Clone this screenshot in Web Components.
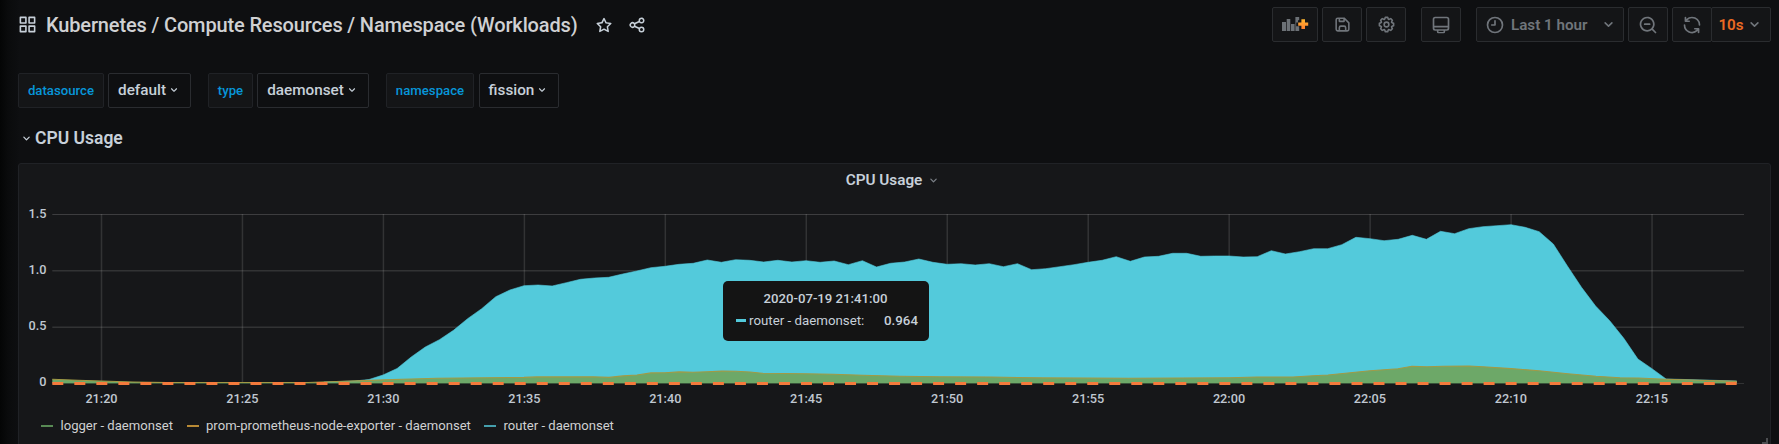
<!DOCTYPE html>
<html lang="en">
<head>
<meta charset="utf-8">
<title>Kubernetes / Compute Resources / Namespace (Workloads)</title>
<style>
html,body{margin:0;height:100%;background:#0e0f11;overflow:hidden}
body{font-family:Roboto,sans-serif;color:#c7d0d9}
</style>
</head>
<body>
<dash-page></dash-page>
<script>
const define = (name, html, setup) => customElements.define(name, class extends HTMLElement {
  connectedCallback() {
    if (this.shadowRoot) return;
    const t = document.createElement('template');
    t.innerHTML = typeof html === 'function' ? html(this) : html;
    this.attachShadow({mode: 'open'}).append(t.content.cloneNode(true));
    if (setup) setup(this);
  }
});

const ICONS = {
  apps: '<path d="M10 13H3a1 1 0 0 0-1 1v7a1 1 0 0 0 1 1h7a1 1 0 0 0 1-1v-7a1 1 0 0 0-1-1Zm-1 7H4v-5h5ZM21 2h-7a1 1 0 0 0-1 1v7a1 1 0 0 0 1 1h7a1 1 0 0 0 1-1V3a1 1 0 0 0-1-1Zm-1 7h-5V4h5Zm1 4h-7a1 1 0 0 0-1 1v7a1 1 0 0 0 1 1h7a1 1 0 0 0 1-1v-7a1 1 0 0 0-1-1Zm-1 7h-5v-5h5ZM10 2H3a1 1 0 0 0-1 1v7a1 1 0 0 0 1 1h7a1 1 0 0 0 1-1V3a1 1 0 0 0-1-1ZM9 9H4V4h5Z"/>',
  star: '<path d="M22 9.67a1 1 0 0 0-.86-.67l-5.69-.83L12.9 3a1 1 0 0 0-1.8 0L8.55 8.16 2.86 9a1 1 0 0 0-.81.68 1 1 0 0 0 .25 1l4.13 4-1 5.68a1 1 0 0 0 1.45 1.07L12 18.76l5.1 2.68c.14.08.3.12.46.12a1 1 0 0 0 .99-1.19l-1-5.68 4.13-4A1 1 0 0 0 22 9.67Zm-6.15 4a1 1 0 0 0-.29.89l.72 4.19-3.76-2a1 1 0 0 0-.94 0l-3.76 2 .72-4.19a1 1 0 0 0-.29-.89l-3-3 4.21-.61a1 1 0 0 0 .76-.55L12 5.7l1.88 3.82a1 1 0 0 0 .76.55l4.21.61Z"/>',
  share: '<path d="M18 14a4 4 0 0 0-3.08 1.48l-5.1-2.35a3.64 3.64 0 0 0 0-2.26l5.1-2.35A4 4 0 1 0 14 6a4.17 4.17 0 0 0 .07.71L8.79 9.14a4 4 0 1 0 0 5.72l5.28 2.43A4.17 4.17 0 0 0 14 18a4 4 0 1 0 4-4Zm0-10a2 2 0 1 1-2 2 2 2 0 0 1 2-2ZM6 14a2 2 0 1 1 2-2 2 2 0 0 1-2 2Zm12 6a2 2 0 1 1 2-2 2 2 0 0 1-2 2Z"/>',
  save: '<path d="m20.71 9.29-6-6a1 1 0 0 0-.32-.21A1.09 1.09 0 0 0 14 3H6a3 3 0 0 0-3 3v12a3 3 0 0 0 3 3h12a3 3 0 0 0 3-3v-8a1 1 0 0 0-.29-.71ZM9 5h4v2H9Zm6 14H9v-3a1 1 0 0 1 1-1h4a1 1 0 0 1 1 1Zm4-1a1 1 0 0 1-1 1h-1v-3a3 3 0 0 0-3-3h-4a3 3 0 0 0-3 3v3H6a1 1 0 0 1-1-1V6a1 1 0 0 1 1-1h1v3a1 1 0 0 0 1 1h6a1 1 0 0 0 1-1V6.41l4 4Z"/>',
  cog: '<path d="m21.32 9.55-1.89-.63.89-1.78A1 1 0 0 0 20.13 6L18 3.87a1 1 0 0 0-1.15-.19l-1.78.89-.63-1.89A1 1 0 0 0 13.5 2h-3a1 1 0 0 0-.95.68l-.63 1.89-1.78-.89A1 1 0 0 0 6 3.87L3.87 6a1 1 0 0 0-.19 1.15l.89 1.78-1.89.63a1 1 0 0 0-.68.94v3a1 1 0 0 0 .68.95l1.89.63-.89 1.78A1 1 0 0 0 3.87 18L6 20.13a1 1 0 0 0 1.15.19l1.78-.89.63 1.89a1 1 0 0 0 .95.68h3a1 1 0 0 0 .95-.68l.63-1.89 1.78.89a1 1 0 0 0 1.13-.19L20.13 18a1 1 0 0 0 .19-1.15l-.89-1.78 1.89-.63a1 1 0 0 0 .68-.94v-3a1 1 0 0 0-.68-.95ZM20 12.78l-1.2.4a2 2 0 0 0-1.16 2.81l.57 1.14-1.1 1.1-1.12-.59a2 2 0 0 0-2.79 1.16l-.4 1.2h-1.58l-.4-1.2a2 2 0 0 0-2.81-1.16l-1.14.57-1.1-1.1.59-1.12a2 2 0 0 0-1.18-2.81L4 12.78v-1.56l1.2-.4a2 2 0 0 0 1.16-2.81l-.57-1.12 1.1-1.1 1.12.57a2 2 0 0 0 2.81-1.16l.4-1.2h1.56l.4 1.2a2 2 0 0 0 2.81 1.16l1.14-.57 1.1 1.1-.59 1.12a2 2 0 0 0 1.18 2.81l1.18.4ZM12 8a4 4 0 1 0 4 4 4 4 0 0 0-4-4Zm0 6a2 2 0 1 1 2-2 2 2 0 0 1-2 2Z"/>',
  monitor: '<path fill-rule="evenodd" d="M19 2H5a3 3 0 0 0-3 3v11a3 3 0 0 0 3 3h2v1a2 2 0 0 0 2 2h6a2 2 0 0 0 2-2v-1h2a3 3 0 0 0 3-3V5a3 3 0 0 0-3-3ZM15 20.300H9V19h6ZM20 16a1 1 0 0 1-1 1H5a1 1 0 0 1-1-1v-1h16Zm0-3H4V5a1 1 0 0 1 1-1h14a1 1 0 0 1 1 1Z"/>',
  clock: '<path d="M12 2a10 10 0 1 0 10 10A10 10 0 0 0 12 2Zm0 18a8 8 0 1 1 8-8 8 8 0 0 1-8 8Zm0-14a1 1 0 0 0-1 1v4H8a1 1 0 0 0 0 2h4a1 1 0 0 0 1-1V7a1 1 0 0 0-1-1Z"/>',
  zoom: '<path d="m21.71 20.290-3.680-3.660A9 9 0 1 0 16.610 18.050l3.680 3.660a1 1 0 0 0 1.420-1.420ZM11 18a7 7 0 1 1 7-7 7 7 0 0 1-7 7Zm3-8H8a1 1 0 0 0 0 2h6a1 1 0 0 0 0-2Z"/>',
  sync: '<path d="M19.910 15.510h-4.530a1 1 0 0 0 0 2h2.400A8 8 0 0 1 4 12a1 1 0 0 0-2 0 10 10 0 0 0 16.880 7.230V21a1 1 0 0 0 2 0v-4.500a1 1 0 0 0-.970-.990ZM12 2a10 10 0 0 0-6.880 2.770V3a1 1 0 0 0-2 0v4.500a1 1 0 0 0 1 1h4.500a1 1 0 0 0 0-2h-2.400A8 8 0 0 1 20 12a1 1 0 0 0 2 0A10 10 0 0 0 12 2Z"/>',
  down: '<path d="M17 9.170a1 1 0 0 0-1.410 0L12 12.710 8.460 9.170a1 1 0 0 0-1.410 1.420l4.240 4.240a1 1 0 0 0 1.420 0L17 10.590a1 1 0 0 0 0-1.420Z"/>'
};

define('ui-icon', el => `<style>
:host{display:inline-flex;flex:none;width:${el.getAttribute('size')}px;height:${el.getAttribute('size')}px}
svg{width:100%;height:100%;fill:currentColor;display:block}
</style><svg viewBox="0 0 24 24">${ICONS[el.getAttribute('name')]}</svg>`);

define('add-panel-icon', `<style>:host{display:flex}svg{display:block}</style>
<svg width="28" height="18" viewBox="0 0 28 18">
<defs><linearGradient id="g" x1="0" y1="0" x2="0" y2="1"><stop offset="0" stop-color="#ffb62e"/><stop offset="1" stop-color="#ff7f30"/></linearGradient></defs>
<g fill="#6c7176"><path d="M1 6h4v9H1zM5.700 3h3.600v12H5.700zM10 8h3.600v7H10zM14.400 1h3.800v3.300h-1.200v2.200h-1.800v3.800h3v4.700h-3.800z"/></g>
<path fill="url(#g)" d="M20.400 3.300h3.600v3.100h3.200v3.400H24v3.200h-3.600V9.800h-3.200V6.400h3.200z"/></svg>`);

define('nav-button', el => `<style>
:host{display:flex;box-sizing:border-box;width:${el.getAttribute('w')}px;height:35px;align-items:center;justify-content:center;
border:1px solid #2a2c2f;border-radius:2px;background:#141517;color:#70757b;font-weight:600;font-size:15.200px}
</style><slot></slot>`);

define('dash-header', `<style>
:host{display:flex;height:35px;align-items:center;padding:7px 8px 0 18px}
h1{margin:0 0 0 9px;font:500 20px/30px Roboto,sans-serif;color:#d0d1d3;white-space:nowrap;letter-spacing:-.14px;width:532px}
.left{display:flex;align-items:center;flex:1}
.right{display:flex}
.range{flex:1;margin-left:6px}
</style>
<div class="left"><ui-icon name="apps" size="19"></ui-icon><h1>Kubernetes / Compute Resources / Namespace (Workloads)</h1>
<ui-icon name="star" size="18" style="margin-left:17px"></ui-icon><ui-icon name="share" size="18" style="margin-left:15px"></ui-icon></div>
<div class="right">
<nav-button w="46"><add-panel-icon></add-panel-icon></nav-button>
<nav-button w="40" style="margin-left:4px"><ui-icon name="save" size="19"></ui-icon></nav-button>
<nav-button w="40" style="margin-left:4px"><ui-icon name="cog" size="19"></ui-icon></nav-button>
<nav-button w="40" style="margin-left:15px"><ui-icon name="monitor" size="20"></ui-icon></nav-button>
<nav-button w="148" style="margin-left:15px"><ui-icon name="clock" size="20" style="margin-left:8px"></ui-icon><span class="range">Last 1 hour</span><ui-icon name="down" size="19" style="margin-right:5px"></ui-icon></nav-button>
<nav-button w="40" style="margin-left:4px"><ui-icon name="zoom" size="20"></ui-icon></nav-button>
<nav-button w="40" style="margin-left:4px"><ui-icon name="sync" size="20"></ui-icon></nav-button>
<nav-button w="60" style="margin-left:-1px"><span style="color:#eb6b23">10s</span><ui-icon name="down" size="19" style="margin-left:1px"></ui-icon></nav-button>
</div>`);

define('var-picker', el => `<style>
:host{display:flex;gap:4px;height:35px}
div{box-sizing:border-box;height:35px;border-radius:2px;display:flex;align-items:center;justify-content:center;white-space:nowrap}
.k{width:${el.getAttribute('kw')}px;background:#141517;border:1px solid #202226;color:#0795d9;font:500 13.200px Roboto,sans-serif}
.v{width:${el.getAttribute('vw')}px;border:1px solid #2a2c30;font:500 15.300px Roboto,sans-serif;padding:0 3px 2px 0}
ui-icon{margin:1px -3px 0 1px}
</style><div class="k">${el.getAttribute('label')}</div><div class="v"><slot></slot><ui-icon name="down" size="14"></ui-icon></div>`);

define('row-title', `<style>
:host{display:flex;align-items:center;height:24px;font:600 17.500px Roboto,sans-serif}
ui-icon{margin:1px 1px 0 0}
</style><ui-icon name="down" size="15"></ui-icon><slot></slot>`);

define('usage-chart', '<style>:host{display:block}svg{display:block}text{font:500 12.700px Roboto,sans-serif;fill:#c0c8d1}</style><svg width="1751" height="218" viewBox="19 194 1751 218"></svg>', el => {
  const router = [375,368.500,357,347,339.700,330.300,318.700,308.700,296.700,290,285.700,285,286,282.700,279.300,278,277.300,274,271,267.700,266.300,264.300,263.300,260,262.300,259.700,260.300,262,260.300,262,260.700,262.300,261,264.700,260.700,267,263.300,262,259,262.300,264.300,263.700,265,263.700,266.700,263.700,269.700,268.700,266.700,264.700,262.300,260.300,256.700,261.300,257,256.300,253.300,253.300,256.300,256,256,257,256.700,250.700,254,251.700,248.700,248.700,244.700,237.300,238.700,240.700,239.300,235.300,239.300,231.300,233.700,228.700,226.700,225.700,224.700,227.300,231.700,244,266,287.300,306,320.700,338.300,359,368.700,379];
  const node = [[52.300,379.200],[78,380.200],[101,381],[133,382],[167,382.600],[308,382.500],[336,381.500],[364,380.600],[383,379.900],[411,379],[437,378.200],[524,377.400],[537,376.900],[593,376.700],[609,377.400],[623,375.900],[637,375],[651,372.900],[665,372.700],[679,371.900],[693,372.300],[707,371.800],[722,371.100],[736,371.300],[750,372],[762,373.300],[806,373.700],[833,374.300],[863,375.300],[900,376.300],[940,376.700],[990,377],[1043,377.900],[1129,378.300],[1229,377.700],[1257,377],[1293,377],[1313,375.800],[1328,375],[1370,370.800],[1398,368.700],[1412,366.200],[1427,366.700],[1443,366.200],[1469,366],[1483,366.700],[1511,368.600],[1539,370.700],[1568,373.700],[1596,376.300],[1620,377.700],[1638,378],[1666,379.300],[1736.700,381.400]];
  const top = [[324,382],[341,381.500],[355,381],[369,379.500], ...router.map((y, i) => [383 + 14.100 * i, y]), [1700,379.900],[1736.700,381]];
  const pts = a => a.map(p => p.map(n => +n.toFixed(2)).join(' ')).join('L');
  const area = (a, c) => `<path d="M${a[0][0]} 383.500L${pts(a)}L${a[a.length-1][0]} 383.500Z" fill="${c}"/>`;
  let s = '<g stroke="#c8c8c8" stroke-opacity=".16">';
  s += '<path d="M52.300 214.500H1744" stroke-opacity=".22"/><path d="M52.300 270.700H1744M52.300 327.200H1744" stroke-width="1.400"/><path d="M52.300 383.500H1744"/>';
  for (let i = 0; i < 12; i++) s += `<path d="M${(101.500 + i * 140.960).toFixed(2)} 214V383.500" stroke-width="1.500"/>`;
  s += '</g>' + area(top, '#53cadb') + area(node, '#6da868');
  s += `<path d="M${pts(top)}" fill="none" stroke="#53cadb" stroke-width=".6"/>`;
  s += `<path d="M${pts(node)}" fill="none" stroke="#a29a45" stroke-width="1.100"/>`;
  s += '<path d="M52.300 383.500H1736.700" stroke="#365238" stroke-width="1.200"/><path d="M52.300 383.500H1736.700" stroke="#f47a3c" stroke-width="3" stroke-dasharray="11 11.020"/>';
  ['1.5','1.0','0.5','0'].forEach((t, i) => s += `<text x="46.500" y="${(217.800 + i * 56.100).toFixed(1)}" text-anchor="end">${t}</text>`);
  for (let i = 0; i < 12; i++) {
    const m = 20 + i * 5, t = (m < 60 ? '21:' : '22:') + String(m % 60).padStart(2, '0');
    s += `<text x="${(101.500 + i * 140.940).toFixed(2)}" y="403" text-anchor="middle">${t}</text>`;
  }
  el.shadowRoot.querySelector('svg').innerHTML = s;
});

define('legend-item', el => `<style>
:host{display:flex;align-items:center;font:400 13.100px Roboto,sans-serif;color:#d0d1d2;white-space:nowrap;width:${el.getAttribute('w')}px}
i{width:12px;height:2px;background:${el.getAttribute('color')};margin:2px 7.500px 0 0}
</style><i></i><slot></slot>`);

define('chart-tooltip', `<style>
:host{display:block;box-sizing:border-box;width:206px;height:60px;border-radius:5px;background:#141414;padding:8px 11px 0 13px}
.t{font:500 13.200px/19px Roboto,sans-serif;text-align:center;padding-right:3px}
.r{display:flex;align-items:center;font:400 13.300px/18px Roboto,sans-serif;margin-top:4px}
i{width:10px;height:3px;background:#53cadb;margin:-1px 3px 0 0}
b{font-weight:500;margin-left:auto}
</style><div class="t">2020-07-19 21:41:00</div><div class="r"><i></i><span>router - daemonset:</span><b>0.964</b></div>`);

define('graph-panel', `<style>
:host{display:block;box-sizing:border-box;position:relative;height:300px;background:#161719;border:1px solid #202226;border-radius:3px}
header{box-sizing:border-box;display:flex;height:30px;padding:2px 2px 0 0;align-items:center;justify-content:center;font:600 15.300px Roboto,sans-serif}
header ui-icon{color:#7b8087;margin-left:4px}
.legend{display:flex;padding:1px 0 0 22px;height:24px;align-items:center}
chart-tooltip{position:absolute;left:704px;top:117px}
.corner{position:absolute;right:2px;top:274px;width:4px;height:4px;border-right:2px solid #4b4d50;border-bottom:2px solid #4b4d50}
</style>
<header>CPU Usage<ui-icon name="down" size="15"></ui-icon></header>
<usage-chart></usage-chart>
<div class="legend"><legend-item w="145.500" color="#588a54">logger - daemonset</legend-item><legend-item w="297.500" color="#b88a35">prom-prometheus-node-exporter - daemonset</legend-item><legend-item w="160" color="#459fad">router - daemonset</legend-item></div>
<chart-tooltip></chart-tooltip><div class="corner"></div>`);

define('dash-page', `<style>
:host{display:block;height:444px;overflow:hidden;background:linear-gradient(90deg,#040505 0,#0a0b0c 8px,#0e0f11 20px)}
.vars{display:flex;gap:17px;padding:31px 0 0 18px}
row-title{margin:18px 0 0 19px}
graph-panel{margin:13px 8px 0 18px}
</style>
<dash-header></dash-header>
<div class="vars"><var-picker label="datasource" kw="86" vw="83">default</var-picker><var-picker label="type" kw="45" vw="112">daemonset</var-picker><var-picker label="namespace" kw="88" vw="80" style="gap:5px">fission</var-picker></div>
<row-title>CPU Usage</row-title>
<graph-panel></graph-panel>`);
</script>
</body>
</html>
